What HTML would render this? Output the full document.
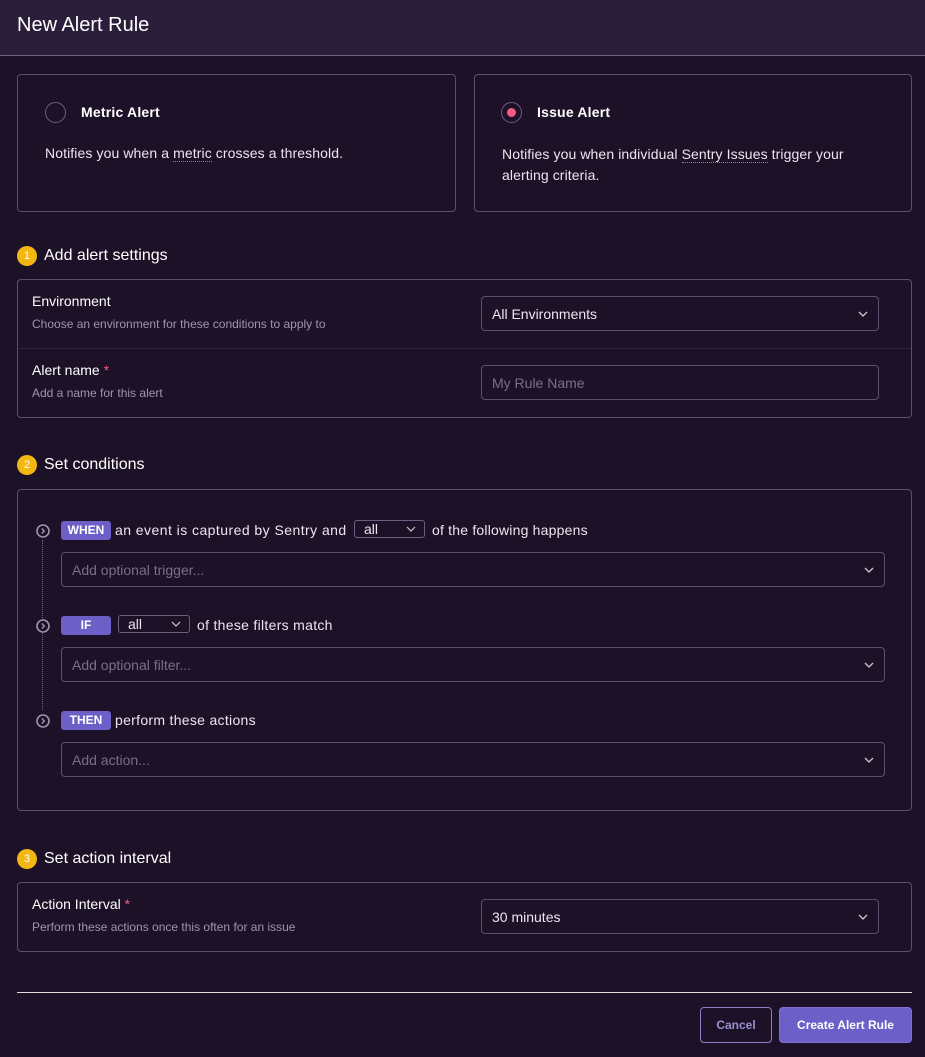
<!DOCTYPE html>
<html><head><style>
*{box-sizing:border-box;margin:0;padding:0}
body{width:925px;height:1057px;background:#1d1127;color:#ebe6ef;font-family:"Liberation Sans",sans-serif;position:relative;overflow:hidden;font-size:14px}
.abs{position:absolute}
.hdr{left:0;top:0;width:925px;height:56px;background:#2b1e3b;border-bottom:1px solid #6c5e80}
.hdr span{position:absolute;left:17px;top:14px;font-size:20px;color:#fff}
.box{border:1px solid #5b4e6e;border-radius:4px}
.radio{width:21px;height:21px;border-radius:50%;border:1px solid #6c5e80}
.t{position:absolute;white-space:nowrap}
.dot{border-bottom:1px dotted #8a7fa0}
.num{width:20px;height:20px;border-radius:50%;background:#f2b712;color:#fff;font-size:11px;text-align:center;line-height:20px}
.sec{font-size:16px;color:#fff}
.lbl{font-size:14px;color:#fff}
.help{font-size:12px;color:#9e95ad}
.inp{border:1px solid #5b4e6e;border-radius:4px;height:35px}
.ph{color:#7a6d8c}
.chev{position:absolute;right:10px;top:12px;width:10px;height:10px}
.tag{background:#6c5fc7;color:#fff;font-weight:bold;font-size:12px;border-radius:3px;height:19px;line-height:19px;text-align:center;width:50px}
.ci{width:14px;height:14px}
</style></head><body>
<div class="abs hdr"><span>New Alert Rule</span></div>

<div class="abs box" style="left:17px;top:74px;width:439px;height:138px"></div>
<div class="abs radio" style="left:45px;top:102px"></div>
<div class="t lbl" style="left:81px;top:104px;font-weight:bold;letter-spacing:0.2px">Metric Alert</div>
<div class="t" style="left:45px;top:145px;letter-spacing:0.1px">Notifies you when a <span class="dot">metric</span> crosses a threshold.</div>

<div class="abs box" style="left:474px;top:74px;width:438px;height:138px"></div>
<div class="abs radio" style="left:501px;top:102px"><div style="position:absolute;left:5px;top:5px;width:9px;height:9px;border-radius:50%;background:#f55a84"></div></div>
<div class="t lbl" style="left:537px;top:104px;font-weight:bold;letter-spacing:0.2px">Issue Alert</div>
<div class="t" style="left:502px;top:144px;line-height:21px;letter-spacing:0.1px">Notifies you when individual <span class="dot">Sentry Issues</span> trigger your<br>alerting criteria.</div>

<div class="abs num" style="left:17px;top:246px">1</div>
<div class="t sec" style="left:44px;top:247px">Add alert settings</div>
<div class="abs box" style="left:17px;top:279px;width:895px;height:139px"></div>
<div class="abs" style="left:18px;top:348px;width:893px;height:1px;background:#2f2340"></div>
<div class="t lbl" style="left:32px;top:293px">Environment</div>
<div class="t help" style="left:32px;top:317px">Choose an environment for these conditions to apply to</div>
<div class="abs inp" style="left:481px;top:296px;width:398px"><span class="t" style="left:10px;top:9px">All Environments</span><svg class="chev" viewBox="0 0 10 10"><path d="M1 3l4 4 4-4" stroke="#ccc" fill="none" stroke-width="1.3"/></svg></div>
<div class="t lbl" style="left:32px;top:362px">Alert name <span style="color:#f55a84">*</span></div>
<div class="t help" style="left:32px;top:386px">Add a name for this alert</div>
<div class="abs inp" style="left:481px;top:365px;width:398px"><span class="t ph" style="left:10px;top:9px">My Rule Name</span></div>

<div class="abs num" style="left:17px;top:455px">2</div>
<div class="t sec" style="left:44px;top:456px">Set conditions</div>
<div class="abs box" style="left:17px;top:489px;width:895px;height:322px"></div>
<div class="abs" style="left:42px;top:540px;height:170px;border-left:1px dotted #6c5e80"></div>
<svg class="abs ci" style="left:36px;top:524px" viewBox="0 0 14 14"><circle cx="7" cy="7" r="6" fill="#1d1127" stroke="#9e95ad" stroke-width="1.6"/><path d="M5.8 4.5l2.5 2.5-2.5 2.5" stroke="#9e95ad" fill="none" stroke-width="1.4"/></svg>
<div class="abs tag" style="left:61px;top:521px">WHEN</div>
<div class="t" style="left:115px;top:522px;letter-spacing:0.45px">an event is captured by Sentry and</div>
<div class="abs" style="left:354px;top:520px;width:71px;height:18px;border:1px solid #6c5e80;border-radius:3px"><span class="t" style="left:9px;top:0">all</span><svg class="chev" style="top:3px;right:8px" viewBox="0 0 10 10"><path d="M1 3l4 4 4-4" stroke="#ccc" fill="none" stroke-width="1.2"/></svg></div>
<div class="t" style="left:432px;top:522px;letter-spacing:0.2px">of the following happens</div>
<div class="abs inp" style="left:61px;top:552px;width:824px"><span class="t ph" style="left:10px;top:9px">Add optional trigger...</span><svg class="chev" viewBox="0 0 10 10"><path d="M1 3l4 4 4-4" stroke="#ccc" fill="none" stroke-width="1.3"/></svg></div>

<svg class="abs ci" style="left:36px;top:619px" viewBox="0 0 14 14"><circle cx="7" cy="7" r="6" fill="#1d1127" stroke="#9e95ad" stroke-width="1.6"/><path d="M5.8 4.5l2.5 2.5-2.5 2.5" stroke="#9e95ad" fill="none" stroke-width="1.4"/></svg>
<div class="abs tag" style="left:61px;top:616px">IF</div>
<div class="t" style="left:118px;top:615px;width:72px;height:18px;border:1px solid #6c5e80;border-radius:3px"><span class="t" style="left:9px;top:0">all</span><svg class="chev" style="top:3px;right:8px" viewBox="0 0 10 10"><path d="M1 3l4 4 4-4" stroke="#ccc" fill="none" stroke-width="1.2"/></svg></div>
<div class="t" style="left:197px;top:617px;letter-spacing:0.3px">of these filters match</div>
<div class="abs inp" style="left:61px;top:647px;width:824px"><span class="t ph" style="left:10px;top:9px">Add optional filter...</span><svg class="chev" viewBox="0 0 10 10"><path d="M1 3l4 4 4-4" stroke="#ccc" fill="none" stroke-width="1.3"/></svg></div>

<svg class="abs ci" style="left:36px;top:714px" viewBox="0 0 14 14"><circle cx="7" cy="7" r="6" fill="#1d1127" stroke="#9e95ad" stroke-width="1.6"/><path d="M5.8 4.5l2.5 2.5-2.5 2.5" stroke="#9e95ad" fill="none" stroke-width="1.4"/></svg>
<div class="abs tag" style="left:61px;top:711px">THEN</div>
<div class="t" style="left:115px;top:712px;letter-spacing:0.3px">perform these actions</div>
<div class="abs inp" style="left:61px;top:742px;width:824px"><span class="t ph" style="left:10px;top:9px">Add action...</span><svg class="chev" viewBox="0 0 10 10"><path d="M1 3l4 4 4-4" stroke="#ccc" fill="none" stroke-width="1.3"/></svg></div>

<div class="abs num" style="left:17px;top:849px">3</div>
<div class="t sec" style="left:44px;top:850px">Set action interval</div>
<div class="abs box" style="left:17px;top:882px;width:895px;height:70px"></div>
<div class="t lbl" style="left:32px;top:896px">Action Interval <span style="color:#f55a84">*</span></div>
<div class="t help" style="left:32px;top:920px">Perform these actions once this often for an issue</div>
<div class="abs inp" style="left:481px;top:899px;width:398px"><span class="t" style="left:10px;top:9px">30 minutes</span><svg class="chev" viewBox="0 0 10 10"><path d="M1 3l4 4 4-4" stroke="#ccc" fill="none" stroke-width="1.3"/></svg></div>

<div class="abs" style="left:17px;top:992px;width:895px;height:1px;background:#ddd"></div>
<div class="abs" style="left:700px;top:1007px;width:72px;height:36px;border:1px solid #8b7fc7;border-radius:4px;color:#9a8fd0;font-weight:bold;font-size:12px;text-align:center;line-height:34px">Cancel</div>
<div class="abs" style="left:779px;top:1007px;width:133px;height:36px;background:#6c5fc7;border:1px solid #7c70d0;border-radius:4px;color:#fff;font-weight:bold;font-size:12px;text-align:center;line-height:34px">Create Alert Rule</div>
</body></html>
